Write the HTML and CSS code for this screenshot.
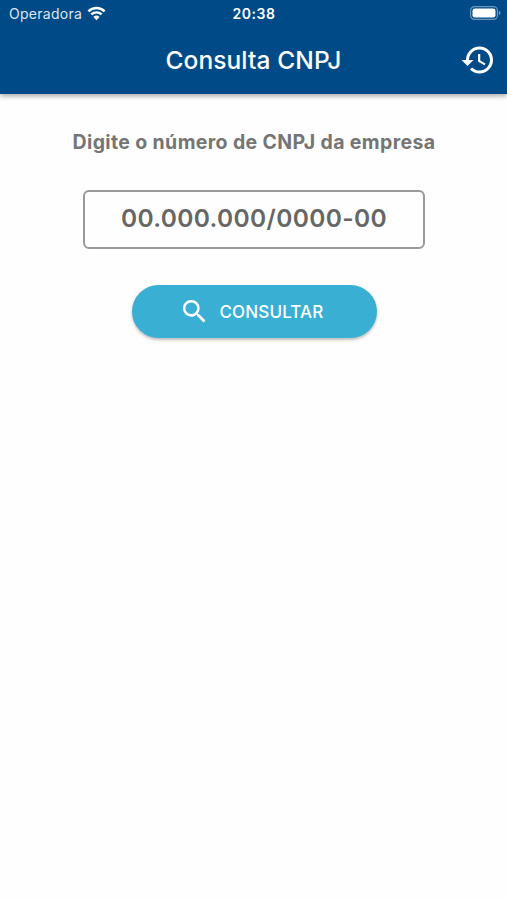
FILE: index.html
```html
<!DOCTYPE html>
<html lang="pt-BR">

<head>
	<meta charset="UTF-8" />
	<meta name="viewport" content="width=device-width, initial-scale=1.0" />
	<title>Consulta CNPJ</title>
	<link rel="stylesheet" href="styles.css">
</head>

<body>
	<header>
		<div class="status-bar">
			<div class="carrier">
				<span>Operadora</span>
				<svg class="wifi" viewBox="0 0 20 15">
					<path d="M1.5 5.2a12.2 12.2 0 0 1 17 0M4.6 8.5a7.8 7.8 0 0 1 10.8 0" />
					<path class="dot" d="M10 14.5L6.7 11.1a4.8 4.8 0 0 1 6.6 0z" />
				</svg>
			</div>
			<span class="clock">20:38</span>
			<svg class="battery" viewBox="0 0 31 14">
				<rect class="outline" x="0.6" y="0.6" width="26.8" height="12.8" rx="3.8" />
				<rect class="level" x="2.5" y="2.5" width="23" height="9" rx="2.2" />
				<path class="tip" d="M28.8 4.8q1.8.7 1.8 2.2t-1.8 2.2z" />
			</svg>
		</div>
		<div class="title-bar">
			<h1>Consulta CNPJ</h1>
			<button class="history" aria-label="Histórico">
				<svg viewBox="0 0 24 24">
					<path d="M13 3a9 9 0 0 0-9 9H1l3.89 3.89.07.14L9 12H6c0-3.87 3.13-7 7-7s7 3.13 7 7-3.13 7-7 7c-1.93 0-3.68-.79-4.94-2.06l-1.42 1.42A8.954 8.954 0 0 0 13 21a9 9 0 0 0 0-18zm-1 5v5l4.28 2.54.72-1.21-3.5-2.08V8H12z" />
				</svg>
			</button>
		</div>
	</header>
	<main>
		<label for="cnpj">Digite o número de CNPJ da empresa</label>
		<input type="text" id="cnpj" name="cnpj" placeholder="00.000.000/0000-00" />
		<button class="search">
			<svg viewBox="0 0 24 24">
				<path d="M15.5 14h-.79l-.28-.27A6.471 6.471 0 0 0 16 9.5 6.5 6.5 0 1 0 9.5 16c1.61 0 3.09-.59 4.23-1.57l.27.28v.79l5 4.99L20.49 19l-4.99-5zm-6 0C7.01 14 5 11.99 5 9.5S7.01 5 9.5 5 14 7.01 14 9.5 11.99 14 9.5 14z" />
			</svg>
			<span>CONSULTAR</span>
		</button>
	</main>
</body>

</html>
```
FILE: styles.css
```css
body {
	margin: 0;
	min-height: 100vh;
	background-color: #fefefe;
	font-family: "Inter", sans-serif;
}

header {
	height: 94px;
	background-color: #004b87;
	color: white;
	box-shadow: 0 2px 5px rgba(0, 0, 0, 0.35);
}

.status-bar {
	display: grid;
	grid-template-columns: 1fr auto 1fr;
	align-items: center;
	height: 27px;
	padding: 0 6px 0 9px;
	font-size: 14px;
}

.carrier {
	display: flex;
	align-items: center;
	gap: 5px;
	color: #dbe7f0;
	letter-spacing: 0.28px;
}

.wifi {
	width: 19px;
	height: 15px;
	margin-top: -1px;
	fill: none;
	stroke: white;
	stroke-width: 2.6;
}

.wifi .dot {
	fill: white;
	stroke: none;
}

.clock {
	margin-right: 2px;
	font-weight: 600;
	letter-spacing: 0.5px;
}

.battery {
	justify-self: end;
	width: 31px;
	height: 14px;
	margin-top: -1px;
}

.outline {
	fill: none;
	stroke: #6d98bb;
	stroke-width: 1.2;
}

.level {
	fill: white;
}

.tip {
	fill: #6d98bb;
}

.title-bar {
	display: grid;
	grid-template-columns: 1fr auto 1fr;
	align-items: center;
	height: 65px;
	padding: 0 11px;
}

h1 {
	grid-column: 2;
	margin: 0;
	font-size: 24.5px;
	font-weight: 500;
	letter-spacing: 0.1px;
}

button {
	border: none;
	padding: 0;
	color: white;
	font-family: inherit;
}

.history {
	justify-self: end;
	display: flex;
	background: none;
}

.history svg {
	width: 36px;
	height: 36px;
	fill: white;
}

main {
	display: flex;
	flex-direction: column;
	align-items: center;
	padding: 36px 0 0 1px;
}

label {
	color: #757575;
	font-size: 19.5px;
	font-weight: 650;
	line-height: 24px;
	letter-spacing: 0.37px;
}

input {
	box-sizing: border-box;
	width: 342px;
	height: 59px;
	margin: 36px 0;
	padding: 0 0 3px;
	border: 2px solid #999;
	border-radius: 6px;
	background: none;
	font-family: inherit;
	font-size: 24.5px;
	font-weight: 600;
	letter-spacing: 0.35px;
	text-align: center;
}

input::placeholder {
	color: #666;
	opacity: 1;
}

.search {
	box-sizing: border-box;
	display: flex;
	align-items: center;
	justify-content: center;
	gap: 10px;
	width: 245px;
	height: 53px;
	padding-right: 6px;
	border-radius: 27px;
	background-color: #3aafd4;
	box-shadow: 0 2px 3px rgba(0, 0, 0, 0.25);
	font-size: 17px;
	font-weight: 500;
	letter-spacing: 0.15px;
}

.search svg {
	width: 31px;
	height: 31px;
	fill: white;
}
```
